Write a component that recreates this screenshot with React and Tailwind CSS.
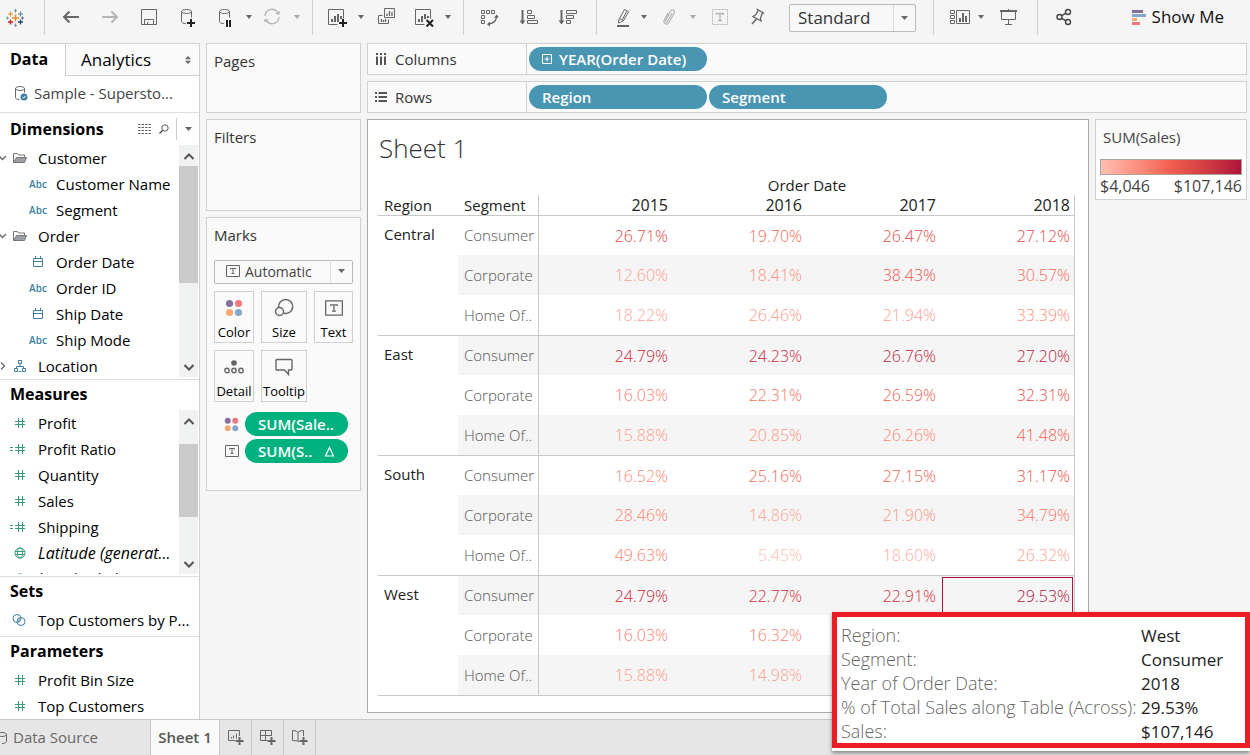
import React, {useState} from "react"
import {clsx} from "clsx"

const YEARS = ["2015", "2016", "2017", "2018"]

const REGIONS = [
    {
        region: "Central",
        rows: [
            {segment: "Consumer", share: ["26.71%", "19.70%", "26.47%", "27.12%"], sales: [67317, 49650, 66713, 68351]},
            {segment: "Corporate", share: ["12.60%", "18.41%", "38.43%", "30.57%"], sales: [19907, 29087, 60718, 48299]},
            {segment: "Home Of..", share: ["18.22%", "26.46%", "21.94%", "33.39%"], sales: [16619, 24135, 20012, 30456]},
        ],
    },
    {
        region: "East",
        rows: [
            {segment: "Consumer", share: ["24.79%", "24.23%", "26.76%", "27.20%"], sales: [89958, 87925, 97105, 98702]},
            {segment: "Corporate", share: ["16.03%", "22.31%", "26.59%", "32.31%"], sales: [36205, 44711, 53289, 64752]},
            {segment: "Home Of..", share: ["15.88%", "20.85%", "26.26%", "41.48%"], sales: [21712, 26576, 33472, 52872]},
        ],
    },
    {
        region: "South",
        rows: [
            {segment: "Consumer", share: ["16.52%", "25.16%", "27.15%", "31.17%"], sales: [32310, 49208, 53100, 60963]},
            {segment: "Corporate", share: ["28.46%", "14.86%", "21.90%", "34.79%"], sales: [34689, 18112, 26693, 42404]},
            {segment: "Home Of..", share: ["49.63%", "5.45%", "18.60%", "26.32%"], sales: [36853, 4046, 13811, 19544]},
        ],
    },
    {
        region: "West",
        rows: [
            {segment: "Consumer", share: ["24.79%", "22.77%", "22.91%", "29.53%"], sales: [89958, 82628, 83136, 107146]},
            {segment: "Corporate", share: ["16.03%", "16.32%", "", ""], sales: [36205, 36860, 0, 0]},
            {segment: "Home Of..", share: ["15.88%", "14.98%", "", ""], sales: [21712, 20481, 0, 0]},
        ],
    },
]

const MIN_SALES = 4046
const MAX_SALES = 107146
const RAMP = [[255, 190, 178], [252, 144, 123], [242, 94, 77], [217, 48, 62], [174, 18, 58]]

const salesColor = (sales) => {
    const t = Math.min(1, Math.max(0, (sales - MIN_SALES) / (MAX_SALES - MIN_SALES))) * (RAMP.length - 1)
    const i = Math.min(RAMP.length - 2, Math.floor(t))
    const [r, g, b] = RAMP[i].map((c, k) => Math.round(c + (RAMP[i + 1][k] - c) * (t - i)))
    return `rgb(${r}, ${g}, ${b})`
}

const DETAILS = [
    ["Region:", "West"],
    ["Segment:", "Consumer"],
    ["Year of Order Date:", "2018"],
    ["% of Total Sales along Table (Across):", "29.53%"],
    ["Sales:", "$107,146"],
]

/* ---------- icons ---------- */

const Icon = ({size = 24, className, children}) => (
    <svg width={size} height={size} viewBox={`0 0 ${size} ${size}`} fill="none" stroke="currentColor" className={clsx("shrink-0", className)} aria-hidden="true">
        {children}
    </svg>
)

const Caret = ({className}) => (
    <svg width="7" height="4" viewBox="0 0 7 4" className={clsx("shrink-0", className)} fill="currentColor" aria-hidden="true">
        <path d="M0 0h7L3.500 4z"/>
    </svg>
)

const LogoIcon = () => (
    <Icon size={18} className="mt-px">
        <path d="M9.500 5.500v7M6 9h7" stroke="#eb912c" strokeWidth="1.600"/>
        <path d="M4.500 2.500v5M2 5h5" stroke="#eb912c" strokeWidth="1.200"/>
        <path d="M14.500 2.500v5M12 5h5" stroke="#59879b" strokeWidth="1.200"/>
        <path d="M4.500 10.500v5M2 13h5" stroke="#c72035" strokeWidth="1.300"/>
        <path d="M14.500 10.500v5M12 13h5" stroke="#1f457e" strokeWidth="1.300"/>
        <path d="M9.500 0v3.500M8 1.700h3M9.500 14.500V18M8 16.300h3M1.500 7.500v3M0 9h3" stroke="#7099a5"/>
        <path d="M16.500 7.500v3M15 9h3" stroke="#5b6591"/>
    </Icon>
)

const BackIcon = () => (
    <Icon><path d="M20 12H5M10.500 6.500L5 12l5.500 5.500" strokeWidth="2"/></Icon>
)

const ForwardIcon = () => (
    <Icon><path d="M4 12h15M13.500 6.500L19 12l-5.500 5.500" strokeWidth="2"/></Icon>
)

const SaveIcon = () => (
    <Icon>
        <path d="M4.500 4.500h15v15h-15z"/>
        <path d="M7.500 19.500v-5h9v5M10.500 19.500v-2h1"/>
    </Icon>
)

const CYLINDER = "M15.500 6.500c0 1.100-2.200 2-5 2s-5-.9-5-2 2.200-2 5-2 5 .9 5 2zM5.500 6.500v10c0 1.200 1.800 2 4.500 2.200M15.500 6.500v6"

const AddDataIcon = () => (
    <Icon>
        <path d={CYLINDER}/>
        <path d="M15 14v8M11 18h8" stroke="#222" strokeWidth="2"/>
    </Icon>
)

const PauseDataIcon = () => (
    <Icon>
        <path d={CYLINDER} transform="translate(1 0)"/>
        <path d="M14 15v7M17 15v7" stroke="#222" strokeWidth="2"/>
    </Icon>
)

const RefreshIcon = () => (
    <Icon>
        <path d="M5 11a7 7 0 0 1 12.500-4M19 12a7 7 0 0 1-12.500 4" strokeWidth="1.300"/>
        <path d="M20.500 6l-1.500 4-4-1.500zM3.500 17.500l1.500-4 4 1.500z" fill="currentColor" stroke="none"/>
    </Icon>
)

const NewSheetIcon = () => (
    <Icon>
        <path d="M12.500 19.500h-9v-15h15v9"/>
        <path d="M7 17v-3M10 17v-6M13 17V9M16 14v-3" strokeWidth="2"/>
        <path d="M18 14v8M14 18h8" stroke="#222" strokeWidth="2"/>
    </Icon>
)

const DuplicateIcon = () => (
    <Icon>
        <path d="M10.500 3.500h10v9h-10z"/>
        <path d="M8.500 10.500h-4v8h10v-4"/>
        <path d="M13 11V8.500M15.500 11V6M18 11V7M7.500 17v-3M9.500 17v-2M11.500 17v-3" strokeWidth="1.300"/>
    </Icon>
)

const ClearIcon = () => (
    <Icon>
        <path d="M12.500 19.500h-9v-15h15v9"/>
        <path d="M7 17v-3M10 17v-6M13 14V9M16 13v-2" strokeWidth="2"/>
        <path d="M14.500 15l6.500 6.500M21 15l-6.500 6.500" stroke="#222" strokeWidth="2"/>
    </Icon>
)

const SwapIcon = () => (
    <Icon>
        <path d="M4.500 5.500h3v3h-3zM9.500 5.500h3v3h-3zM14.500 5.500h3v3h-3zM4.500 10.500h3v3h-3zM4.500 15.500h3v3h-3z"/>
        <path d="M19.500 11c0 5-3 7.500-8 8" strokeWidth="1.500"/>
        <path d="M17 12.500l2.700-3 2.300 3zM13 16.500l-3 2.700 3 2.300z" fill="currentColor" stroke="none"/>
    </Icon>
)

const SortAscIcon = () => (
    <Icon>
        <path d="M5.500 5v12" strokeWidth="2"/>
        <path d="M2.500 15.500h6l-3 4z" fill="currentColor" stroke="none"/>
        <path d="M10.500 5.500h4v3h-4zM10.500 10.500h7v3h-7zM10.500 15.500h10v3h-10z"/>
    </Icon>
)

const SortDescIcon = () => (
    <Icon>
        <path d="M5.500 5v12" strokeWidth="2"/>
        <path d="M2.500 15.500h6l-3 4z" fill="currentColor" stroke="none"/>
        <path d="M10.500 5.500h10v3h-10zM10.500 10.500h7v3h-7zM10.500 15.500h4v3h-4z"/>
    </Icon>
)

const HighlightIcon = () => (
    <Icon>
        <path d="M6 21h12" strokeWidth="2"/>
        <path d="M8.500 13.500L13.500 4.500l4 2.200-5 9-3 1.500-2 .8.200-2zM8.500 13.500l4 2.200M11.500 14.500l4-8"/>
    </Icon>
)

const ClipIcon = () => (
    <Icon>
        <path d="M15 8l-4.500 8.500c-.6 1.200-2.500.3-1.900-1L13.500 6c1.300-2.500 5-.6 3.800 1.800L12 17.500c-1.700 3.300-6.400 1-4.800-2.300L11 8" strokeWidth="1.200"/>
    </Icon>
)

const LabelIcon = () => (
    <Icon>
        <path d="M4.500 4.500h15v15h-15z" strokeDasharray="2 1"/>
        <path d="M8.500 10V8.500h7V10M12 8.500v7M10 15.500h4" strokeWidth="1.300"/>
    </Icon>
)

const PinIcon = () => (
    <Icon>
        <path d="M12.500 4.500l6 3.500-1.500 1-1.500 4 .5 3-8-4.500 2.500-1.500 2.500-4z" strokeWidth="1.300"/>
        <path d="M11.500 14L7 19" strokeWidth="1.500"/>
    </Icon>
)

const CardsIcon = () => (
    <Icon>
        <path d="M2.500 5.500h4v3h-4zM2.500 10.500h4v3h-4zM2.500 15.500h4v3h-4zM8.500 5.500h13v13h-13z"/>
        <path d="M12 17v-4M15 17V8M18 17v-6" strokeWidth="2"/>
    </Icon>
)

const PresentIcon = () => (
    <Icon>
        <path d="M4 6h17" strokeWidth="2"/>
        <path d="M5.500 6v8.500h14V6M12.500 14.500v5M9 19.500h7M12.500 4v2"/>
    </Icon>
)

const ShareIcon = () => (
    <Icon>
        <circle cx="7.500" cy="12" r="2.500" strokeWidth="1.400"/>
        <circle cx="16" cy="7" r="2.500" strokeWidth="1.400"/>
        <circle cx="16" cy="17" r="2.500" strokeWidth="1.400"/>
        <path d="M9.700 10.700l4.200-2.500M9.700 13.300l4.200 2.500" strokeWidth="1.400"/>
    </Icon>
)

const ShowMeIcon = () => (
    <Icon size={16}>
        <path d="M1 2.500h11" stroke="#84709b" strokeWidth="3"/>
        <path d="M1 6.500h14" stroke="#85a7cc" strokeWidth="3"/>
        <path d="M1 10.500h5" stroke="#f6a973" strokeWidth="3"/>
        <path d="M1 14.500h8" stroke="#f17982" strokeWidth="3"/>
    </Icon>
)

const SourceIcon = ({checked}) => (
    <Icon size={16} className="text-[#666]">
        <path d="M10.500 3.500c0 1.100-2 2-4.500 2s-4.500-.9-4.500-2 2-2 4.500-2 4.500.9 4.500 2zM1.500 3.500v9c0 1.200 1.500 2 4 2M10.500 3.500v4"/>
        {checked && <circle cx="10" cy="12" r="3.500" fill="#3c7fa0" stroke="none"/>}
        {checked && <path d="M8.500 12l1.200 1.200 2-2.400" stroke="#fff"/>}
    </Icon>
)

const FolderIcon = () => (
    <Icon size={16} className="text-[#777]">
        <path d="M1.500 12.500v-9h4l1 1.500h6v2"/>
        <path d="M4.500 7.500h10l-2 5h-11z" fill="#9aa0a4"/>
    </Icon>
)

const CalendarIcon = () => (
    <Icon size={12}><path d="M1.500 2.500h9v8h-9zM1.500 5.500h9M3.500 0v3M8.500 0v3"/></Icon>
)

const HierarchyIcon = () => (
    <Icon size={12}><path d="M4.500 .5h3v3h-3zM.5 8.500h3v3h-3zM8.500 8.500h3v3h-3zM6 4v2.500M2.500 8.500v-2h7v2M4.500 11.500h3"/></Icon>
)

const HashIcon = () => (
    <Icon size={12}><path d="M4.500 1v10M8.500 1v10M1 4.500h10M1 7.500h10"/></Icon>
)

const GlobeIcon = () => (
    <Icon size={12}>
        <circle cx="6" cy="6" r="5"/>
        <ellipse cx="6" cy="6" rx="2.500" ry="5"/>
        <path d="M1 4.500h10M1 7.500h10"/>
    </Icon>
)

const SetIcon = () => (
    <Icon size={14} className="text-[#3c7fa0]">
        <path d="M8.500 4.500a4 4 0 0 1-3 5 4 4 0 0 1 3-5z" fill="#a8c8d8" stroke="none"/>
        <circle cx="5" cy="5.500" r="4"/>
        <circle cx="9" cy="8.500" r="4"/>
    </Icon>
)

const TextIcon = ({size = 14, className}) => (
    <svg width={size} height={size} viewBox="0 0 14 14" fill="none" stroke="currentColor" className={clsx("shrink-0", className)} aria-hidden="true">
        <path d="M.5 1.500h13v11H.5z"/>
        <path d="M4.500 5.500v-1h5v1M7 4.500v5M5.500 9.500h3"/>
    </svg>
)

const ColorIcon = ({size = 18}) => (
    <svg width={size} height={size} viewBox="0 0 18 18" aria-hidden="true" className="shrink-0">
        <circle cx="4.500" cy="4.500" r="3.600" fill="#84709b"/>
        <circle cx="13.500" cy="4.500" r="3.600" fill="#f17982"/>
        <circle cx="4.500" cy="13.500" r="3.600" fill="#f6a973"/>
        <circle cx="13.500" cy="13.500" r="3.600" fill="#85a7cc"/>
    </svg>
)

const SizeIcon = () => (
    <Icon size={20}>
        <path d="M4.700 9.300a7 7 0 1 1 5.300 6" strokeWidth="1.500"/>
        <circle cx="5.500" cy="13.500" r="4" strokeWidth="1.500"/>
    </Icon>
)

const DetailIcon = () => (
    <Icon size={20}>
        <circle cx="10" cy="6" r="2.800" fill="currentColor" stroke="none"/>
        <circle cx="3" cy="13.500" r="2.200" strokeWidth="1.400"/>
        <circle cx="10" cy="13.500" r="2.200" strokeWidth="1.400"/>
        <circle cx="17" cy="13.500" r="2.200" strokeWidth="1.400"/>
    </Icon>
)

const TooltipIcon = () => (
    <Icon size={20}><path d="M3 2.500h14a1 1 0 0 1 1 1V12a1 1 0 0 1-1 1h-2.500v4.500L10.500 13H3a1 1 0 0 1-1-1V3.500a1 1 0 0 1 1-1z" strokeWidth="1.400"/></Icon>
)

const TabSheetIcon = () => (
    <Icon size={18}>
        <path d="M8 11.500H1.500v-10h11V7M4.500 9.500V8M6.500 9.500v-3M9.500 9.500v-5"/>
        <path d="M12.500 8v8M8.500 12h8" strokeWidth="2"/>
    </Icon>
)

const TabDashboardIcon = () => (
    <Icon size={18}>
        <path d="M8 11.500H1.500v-10h11V7M1.500 6.500h11M6.500 1.500v10"/>
        <path d="M12.500 8v8M8.500 12h8" strokeWidth="2"/>
    </Icon>
)

const TabStoryIcon = () => (
    <Icon size={18}>
        <path d="M8 13l-1-1-5.500-.5v-10L5 2l2 1.500L9 2l3.500-.5V7M7 3.500V12"/>
        <path d="M12.500 8v8M8.500 12h8" strokeWidth="2"/>
    </Icon>
)

/* ---------- toolbar ---------- */

const ToolButton = ({label, className, children}) => (
    <button type="button" aria-label={label} className={clsx("flex h-[34px] w-6 shrink-0 items-center justify-center", className)}>
        {children}
    </button>
)

const MenuButton = ({label, className, muted}) => (
    <button type="button" aria-label={label} className={clsx("flex h-[34px] w-[10px] shrink-0 items-center justify-center", muted && "text-[#aaa]", className)}>
        <svg width="6" height="4" viewBox="0 0 6 4" fill="currentColor" aria-hidden="true"><path d="M0 0h6L3 4z"/></svg>
    </button>
)

const Divider = ({className}) => <div className={clsx("h-[35px] w-px shrink-0 bg-[#cfcfcf]", className)}/>

const Toolbar = () => (
    <header className="flex h-[43px] shrink-0 text-[#666]">
        <button type="button" aria-label="Start page" className="flex h-[34px] w-11 shrink-0 items-center pl-1.5">
            <LogoIcon/>
        </button>
        <Divider/>
        <ToolButton label="Undo" className="ml-[14px]"><BackIcon/></ToolButton>
        <ToolButton label="Redo" className="ml-[15px] text-[#b5b5b5]"><ForwardIcon/></ToolButton>
        <ToolButton label="Save" className="ml-[15px]"><SaveIcon/></ToolButton>
        <ToolButton label="New data source" className="ml-[15px]"><AddDataIcon/></ToolButton>
        <ToolButton label="Pause auto updates" className="ml-[13px]"><PauseDataIcon/></ToolButton>
        <MenuButton label="Update options" className="ml-[7px]"/>
        <ToolButton label="Run update" className="ml-1.5 text-[#b5b5b5]"><RefreshIcon/></ToolButton>
        <MenuButton label="Run options" className="ml-2" muted/>
        <Divider className="ml-[10px]"/>
        <ToolButton label="New worksheet" className="ml-3"><NewSheetIcon/></ToolButton>
        <MenuButton label="New options" className="ml-[7px]"/>
        <ToolButton label="Duplicate" className="ml-2"><DuplicateIcon/></ToolButton>
        <ToolButton label="Clear sheet" className="ml-[14px]"><ClearIcon/></ToolButton>
        <MenuButton label="Clear options" className="ml-[7px]"/>
        <Divider className="ml-[10px]"/>
        <ToolButton label="Swap rows and columns" className="ml-[13px]"><SwapIcon/></ToolButton>
        <ToolButton label="Sort ascending" className="ml-4"><SortAscIcon/></ToolButton>
        <ToolButton label="Sort descending" className="ml-[15px]"><SortDescIcon/></ToolButton>
        <Divider className="ml-4"/>
        <ToolButton label="Highlight" className="ml-[14px]"><HighlightIcon/></ToolButton>
        <MenuButton label="Highlight options" className="ml-1"/>
        <ToolButton label="Group members" className="ml-2 text-[#b5b5b5]"><ClipIcon/></ToolButton>
        <MenuButton label="Group options" className="ml-[7px]" muted/>
        <ToolButton label="Show mark labels" className="ml-[10px] text-[#b5b5b5]"><LabelIcon/></ToolButton>
        <ToolButton label="Fix axes" className="ml-[13px]"><PinIcon/></ToolButton>
        <div className="relative mt-1 ml-5 h-7 w-[127px] shrink-0">
            <select aria-label="Fit" className="h-full w-full appearance-none rounded-xs border border-[#bbb] bg-[#f8f8f8] pl-2 text-[17px] text-[#333]">
                <option>Standard</option>
            </select>
            <div className="pointer-events-none absolute inset-y-px right-px flex w-[22px] items-center justify-center border-l border-[#ddd]">
                <Caret/>
            </div>
        </div>
        <Divider className="ml-[17px]"/>
        <ToolButton label="Show/hide cards" className="ml-[14px]"><CardsIcon/></ToolButton>
        <MenuButton label="Card options" className="ml-1"/>
        <ToolButton label="Presentation mode" className="ml-[10px]"><PresentIcon/></ToolButton>
        <Divider className="ml-[17px]"/>
        <ToolButton label="Share" className="ml-[14px] text-[#444]"><ShareIcon/></ToolButton>
        <button type="button" className="mr-[26px] ml-auto flex h-[34px] items-center gap-[5px] text-[17px] whitespace-nowrap text-[#111]">
            <ShowMeIcon/>
            Show Me
        </button>
    </header>
)

/* ---------- data pane ---------- */

const Scrollbar = ({before, thumb}) => (
    <div className="flex w-[19px] shrink-0 flex-col bg-[#f0f1f1] text-[#555]" aria-hidden="true">
        <div className={clsx("flex justify-center pt-2", before)}>
            <svg width="10" height="7" viewBox="0 0 10 7" fill="none" stroke="currentColor" strokeWidth="2"><path d="M.5 6L5 1.500 9.500 6"/></svg>
        </div>
        <div className={clsx("bg-[#cacaca]", thumb)}/>
        <div className="mt-auto flex justify-center pb-1.5">
            <svg width="10" height="7" viewBox="0 0 10 7" fill="none" stroke="currentColor" strokeWidth="2"><path d="M.5 1L5 5.500 9.500 1"/></svg>
        </div>
    </div>
)

const Folder = ({open, icon, name}) => (
    <li className="flex h-[26px] items-center">
        <svg width="7" height="8" viewBox="0 0 7 8" fill="none" stroke="#666" strokeWidth="1.300" aria-hidden="true">
            {open ? <path d="M-1 2l3.500 3.500L6 2"/> : <path d="M1 .5L4.500 4 1 7.500"/>}
        </svg>
        <span className="flex w-[31px] pl-[5px] text-[#3c7fa0]">{icon}</span>
        {name}
    </li>
)

const Field = ({type, name}) => (
    <li className="flex h-[26px] items-center text-[#3c7fa0]">
        <span className="flex w-14 justify-center pl-5 text-[10px] font-semibold">
            {type === "date" ? <CalendarIcon/> : "Abc"}
        </span>
        <span className="text-black">{name}</span>
    </li>
)

const Measure = ({icon, calc, name, italic}) => (
    <li className="flex h-[26px] items-center text-[#3a9b78]">
        <span className="flex w-[38px] shrink-0 items-center justify-end pr-3">
            {calc && <svg width="4" height="12" viewBox="0 0 4 12" stroke="currentColor" aria-hidden="true"><path d="M0 4.500h3M0 7.500h3"/></svg>}
            {icon || <HashIcon/>}
        </span>
        <span className={clsx("whitespace-nowrap text-black", italic && "text-base italic")}>{name}</span>
    </li>
)

const SectionTitle = ({children}) => (
    <h2 className="flex h-[30px] items-center pb-0.5 pl-[10px] text-base font-bold">{children}</h2>
)

const DataPane = () => (
    <aside className="flex w-[200px] shrink-0 flex-col border-t border-r border-[#d0d0d0] bg-white text-[15px] text-black">
        <div className="flex h-8 shrink-0">
            <button type="button" className="w-[65px] shrink-0 pb-0.5 pl-[10px] text-left text-base font-bold">Data</button>
            <button type="button" className="flex grow items-center justify-between border-b border-l border-[#d0d0d0] bg-[#fafafa] pr-2 pl-[15px] text-[17px]">
                Analytics
                <svg width="6" height="8" viewBox="0 0 6 8" fill="#666" aria-hidden="true"><path d="M0 3.300h6L3 0zM0 4.700h6L3 8z"/></svg>
            </button>
        </div>
        <div className="flex h-[37px] shrink-0 items-center gap-1 border-b border-[#ddd] pb-0.5 pl-[14px] text-[#444]">
            <SourceIcon checked/>
            <span className="whitespace-nowrap">Sample - Supersto...</span>
        </div>

        <section className="border-b border-[#ddd] pb-0.5">
            <div className="flex h-8 items-center">
                <h2 className="grow pl-[10px] text-base font-bold">Dimensions</h2>
                <button type="button" aria-label="View as list" className="text-[#666]">
                    <svg width="13" height="10" viewBox="0 0 13 10" stroke="currentColor" strokeDasharray="2.500 1" aria-hidden="true"><path d="M0 .5h13M0 3.500h13M0 6.500h13M0 9.500h13"/></svg>
                </button>
                <button type="button" aria-label="Find field" className="ml-2 text-[#555]">
                    <Icon size={10}><circle cx="6" cy="4" r="3.200"/><path d="M3.700 6.300L.5 9.500" strokeWidth="1.500"/></Icon>
                </button>
                <button type="button" aria-label="Pane menu" className="ml-[7px] flex h-[22px] w-[23px] items-center justify-center border-l border-[#ccc] text-[#666]">
                    <Caret/>
                </button>
            </div>
            <div className="flex h-[232px] pr-px">
                <ul className="grow overflow-hidden">
                    <Folder open icon={<FolderIcon/>} name="Customer"/>
                    <Field name="Customer Name"/>
                    <Field name="Segment"/>
                    <Folder open icon={<FolderIcon/>} name="Order"/>
                    <Field type="date" name="Order Date"/>
                    <Field name="Order ID"/>
                    <Field type="date" name="Ship Date"/>
                    <Field name="Ship Mode"/>
                    <Folder icon={<span className="pl-0.5"><HierarchyIcon/></span>} name="Location"/>
                </ul>
                <Scrollbar before="h-[21px]" thumb="h-[117px]"/>
            </div>
        </section>

        <section className="border-b border-[#ddd] pb-0.5">
            <SectionTitle>Measures</SectionTitle>
            <div className="flex h-[164px] pr-px">
                <ul className="min-w-0 grow overflow-hidden">
                    <Measure name="Profit"/>
                    <Measure calc name="Profit Ratio"/>
                    <Measure name="Quantity"/>
                    <Measure name="Sales"/>
                    <Measure calc name="Shipping"/>
                    <Measure icon={<GlobeIcon/>} italic name="Latitude (generat..."/>
                    <Measure icon={<GlobeIcon/>} italic name="Longitude (gene..."/>
                </ul>
                <Scrollbar before="h-[34px]" thumb="h-[73px]"/>
            </div>
        </section>

        <section className="border-b border-[#ddd] pb-[3px]">
            <SectionTitle>Sets</SectionTitle>
            <ul>
                <Measure icon={<SetIcon/>} name="Top Customers by P..."/>
            </ul>
        </section>

        <section>
            <SectionTitle>Parameters</SectionTitle>
            <ul>
                <Measure name="Profit Bin Size"/>
                <Measure name="Top Customers"/>
            </ul>
        </section>
    </aside>
)

/* ---------- cards ---------- */

const Card = ({title, className, children}) => (
    <section className={clsx("border border-[#d0d0d0] bg-[#fafafa] px-[7px]", className)}>
        <h2 className="flex h-[35px] items-center text-[15px] text-[#333]">{title}</h2>
        {children}
    </section>
)

const MarkButton = ({icon, label}) => (
    <button type="button" className="flex h-[52px] flex-col items-center justify-between border border-[#d0d0d0] bg-[#fafafa] pt-1.5 text-[13px] text-black">
        <span className="flex h-5 items-center text-[#666]">{icon}</span>
        <span className="leading-5">{label}</span>
    </button>
)

const MarkPill = ({icon, children}) => (
    <div className="flex items-center">
        <span className="flex w-[31px] justify-center pl-1 text-[#666]">{icon}</span>
        <button type="button" className="flex h-6 w-[103px] items-center justify-between rounded-full bg-[#00b180] pr-[13px] pl-[13px] text-[15px] font-semibold text-white">
            {children}
        </button>
    </div>
)

const Cards = () => (
    <div className="ml-1.5 flex w-[155px] shrink-0 flex-col gap-1.5">
        <Card title="Pages" className="h-[70px]"/>
        <Card title="Filters" className="h-[92px]"/>
        <Card title="Marks" className="h-[274px]">
            <div className="relative mt-1.5 h-6">
                <select aria-label="Mark type" className="h-full w-full appearance-none rounded-xs border border-[#bbb] bg-[#fafafa] pl-[30px] text-sm text-[#444]">
                    <option>Automatic</option>
                </select>
                <TextIcon className="pointer-events-none absolute top-[5px] left-3 text-[#666]"/>
                <div className="pointer-events-none absolute inset-y-px right-px flex w-[22px] items-center justify-center border-l border-[#ddd] text-[#666]">
                    <Caret/>
                </div>
            </div>
            <div className="mt-2 grid grid-cols-[40px_46px_39px] gap-[7px]">
                <MarkButton icon={<ColorIcon/>} label="Color"/>
                <MarkButton icon={<SizeIcon/>} label="Size"/>
                <MarkButton icon={<TextIcon size={18}/>} label="Text"/>
                <MarkButton icon={<DetailIcon/>} label="Detail"/>
                <MarkButton icon={<TooltipIcon/>} label="Tooltip"/>
            </div>
            <div className="mt-[10px] flex flex-col gap-[3px]">
                <MarkPill icon={<ColorIcon size={15}/>}>SUM(Sale..</MarkPill>
                <MarkPill icon={<TextIcon/>}>
                    SUM(S..
                    <svg width="11" height="11" viewBox="0 0 11 11" fill="none" stroke="#fff" strokeWidth="1.200" aria-hidden="true"><path d="M5.500 1.500L9.500 10h-8z"/></svg>
                </MarkPill>
            </div>
        </Card>
    </div>
)

/* ---------- shelves ---------- */

const ColumnsIcon = () => (
    <svg width="12" height="12" viewBox="0 0 12 12" stroke="#555" strokeWidth="2" aria-hidden="true">
        <path d="M2 0v2M6 0v2M10 0v2M2 3.500v8.500M6 3.500v8.500M10 3.500v8.500"/>
    </svg>
)

const RowsIcon = () => (
    <svg width="12" height="12" viewBox="0 0 12 12" stroke="#555" strokeWidth="2" aria-hidden="true">
        <path d="M0 2h2M0 6h2M0 10h2M3.500 2h8.500M3.500 6h8.500M3.500 10h8.500"/>
    </svg>
)

const Shelf = ({icon, label, children}) => (
    <div className="flex h-8 border border-[#d0d0d0] bg-[#fafafa] text-[15px]">
        <div className="flex w-[159px] shrink-0 items-center gap-2 border-r border-[#d0d0d0] pl-[7px] text-[#333]">
            {icon}
            {label}
        </div>
        <div className="flex items-center gap-0.5 pl-0.5">{children}</div>
    </div>
)

const Pill = ({children}) => (
    <button type="button" className="flex h-6 w-[178px] items-center gap-[7px] rounded-full bg-[#4996b2] pl-[13px] text-[15px] font-semibold whitespace-nowrap text-white">
        {children}
    </button>
)

/* ---------- sheet ---------- */

const SheetView = ({selected, onSelect}) => {
    let rowIndex = -1

    return (
        <section className="min-w-0 grow border border-[#aaa] bg-white pr-[13px] pl-[10px]">
            <h1 className="flex h-14 items-center pl-px text-[26px] font-light text-[#333]">Sheet 1</h1>
            <table className="w-full table-fixed border-separate border-spacing-0 text-[15px] font-light">
                <colgroup>
                    <col className="w-20"/>
                    <col className="w-[81px]"/>
                    <col span="4"/>
                </colgroup>
                <thead className="text-[#222]">
                    <tr className="h-[19px] leading-[19px]">
                        <th colSpan="2" className="p-0"/>
                        <th colSpan="4" className="p-0 text-center font-medium">Order Date</th>
                    </tr>
                    <tr className="h-5 leading-5">
                        <th className="p-0 pl-1.5 text-left font-medium">Region</th>
                        <th className="border-r border-[#c8c8c8] p-0 pl-1.5 text-left font-medium">Segment</th>
                        {YEARS.map((year) => (
                            <th key={year} className="p-0 pr-[5px] text-right text-base leading-5 font-medium last:border-r last:border-[#c8c8c8] last:pr-1">{year}</th>
                        ))}
                    </tr>
                </thead>
                <tbody>
                    {REGIONS.map(({region, rows}, g) => rows.map(({segment, share, sales}, i) => {
                        rowIndex += 1
                        const isLast = g === REGIONS.length - 1 && i === rows.length - 1
                        const line = clsx(
                            "border-[#c8c8c8] p-0",
                            isLast ? "h-[41px] border-b" : "h-10",
                            i === 0 && "border-t"
                        )
                        return (
                            <tr key={region + segment} className={clsx(rowIndex % 2 === 1 && "bg-[#f5f5f5]")}>
                                {i === 0 && (
                                    <th rowSpan={rows.length} className={clsx("border-t border-[#c8c8c8] bg-white p-0 pt-[7px] pl-1.5 text-left align-top font-medium text-[#222]", g === REGIONS.length - 1 && "border-b")}>{region}</th>
                                )}
                                <td className={clsx(line, "border-r pl-1.5 whitespace-nowrap text-[#555]")}>{segment}</td>
                                {share.map((value, c) => {
                                    const key = `${region}-${segment}-${YEARS[c]}`
                                    const isSelected = key === selected
                                    return (
                                        <td
                                            key={key}
                                            onClick={() => onSelect(key)}
                                            className={clsx(line, "text-right text-base last:border-r", isSelected ? "px-px" : "pr-[5px] last:pr-1")}
                                            style={{color: salesColor(sales[c])}}
                                        >
                                            {isSelected
                                                ? <div className="flex h-[37px] items-center justify-end border border-[#ae123a] pr-0.5">{value}</div>
                                                : value}
                                        </td>
                                    )
                                })}
                            </tr>
                        )
                    }))}
                </tbody>
            </table>
        </section>
    )
}

const Legend = () => (
    <section className="w-[152px] shrink-0 self-start border border-[#d0d0d0] bg-white text-[#444]">
        <h2 className="flex h-[35px] items-center bg-[#fafafa] pl-[7px] text-[15px]">SUM(Sales)</h2>
        <div className="px-1 pt-1 pb-0.5">
            <div className="h-4 border border-[#a9a49a] bg-linear-to-r from-[#ffbeb2] via-[#f25e4d] to-[#ae123a]"/>
            <div className="flex justify-between text-base leading-[22px]">
                <span>$4,046</span>
                <span>$107,146</span>
            </div>
        </div>
    </section>
)

const MarkTooltip = () => (
    <div className="absolute right-0 bottom-1 w-[418px] bg-white pb-[3px] shadow-[0_2px_4px_rgba(0,0,0,0.45)]">
        <dl className="border-5 border-[#ed1c24] bg-white pt-1.5 pl-1 leading-6 whitespace-nowrap">
            {DETAILS.map(([name, value]) => (
                <div key={name} className="flex h-6 items-baseline">
                    <dt className="w-[300px] shrink-0 text-[18px] leading-6 font-light text-[#666]">{name}</dt>
                    <dd className="text-[17px] leading-6 font-medium text-[#222]">{value}</dd>
                </div>
            ))}
        </dl>
    </div>
)

const SheetTabs = () => (
    <nav className="flex h-9 shrink-0 border-t border-[#c8c8c8] bg-[#e6e6e6] text-[15px] text-[#666]">
        <button type="button" className="flex w-[150px] items-center overflow-hidden whitespace-nowrap">
            <svg width="13" height="14" viewBox="0 0 13 14" fill="none" stroke="currentColor" className="shrink-0" aria-hidden="true">
                <path d="M6.500 3.500c0 1.100-2 2-4.500 2s-4.500-.9-4.500-2 2-2 4.500-2 4.500.9 4.500 2zM6.500 3.500v7c0 1.100-2 2-4.500 2"/>
            </svg>
            Data Source
        </button>
        <button type="button" className="w-[70px] border-x border-[#c8c8c8] bg-[#fafafa] font-semibold whitespace-nowrap text-[#555]">Sheet 1</button>
        <button type="button" aria-label="New worksheet" className="flex w-8 items-center justify-center border-r border-[#c8c8c8]"><TabSheetIcon/></button>
        <button type="button" aria-label="New dashboard" className="flex w-8 items-center justify-center border-r border-[#c8c8c8]"><TabDashboardIcon/></button>
        <button type="button" aria-label="New story" className="flex w-8 items-center justify-center border-r border-[#c8c8c8]"><TabStoryIcon/></button>
    </nav>
)

const App = () => {
    const [selected, setSelected] = useState("West-Consumer-2018")

    return (
        <div className="relative flex h-screen flex-col overflow-hidden bg-[#f5f5f5] font-['Open_Sans',sans-serif]">
            <Toolbar/>
            <div className="flex min-h-0 grow">
                <DataPane/>
                <Cards/>
                <main className="mr-[3px] mb-1.5 ml-1.5 flex min-w-0 grow flex-col gap-1.5">
                    <Shelf icon={<ColumnsIcon/>} label="Columns">
                        <Pill>
                            <Icon size={10}><path d="M.5 .5h9v9h-9zM2.500 5h5M5 2.500v5"/></Icon>
                            YEAR(Order Date)
                        </Pill>
                    </Shelf>
                    <Shelf icon={<RowsIcon/>} label="Rows">
                        <Pill>Region</Pill>
                        <Pill>Segment</Pill>
                    </Shelf>
                    <div className="flex min-h-0 grow gap-1.5">
                        <SheetView selected={selected} onSelect={setSelected}/>
                        <Legend/>
                    </div>
                </main>
            </div>
            <SheetTabs/>
            <MarkTooltip/>
        </div>
    )
}

export default App;
